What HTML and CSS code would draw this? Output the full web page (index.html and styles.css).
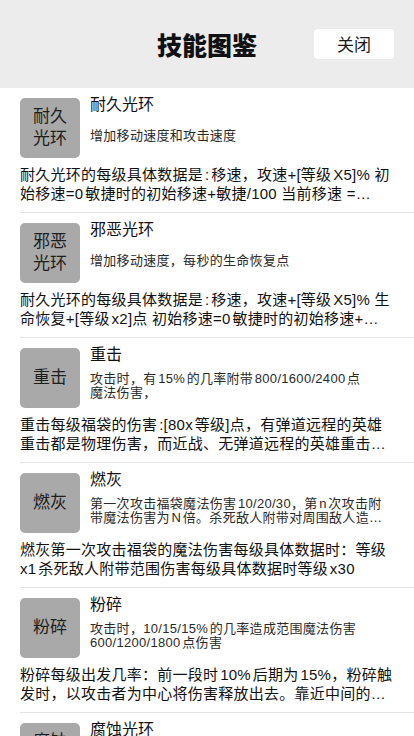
FILE: index.html
```html
<!DOCTYPE html>
<html lang="zh">
<head>
<meta charset="utf-8">
<meta name="viewport" content="width=device-width, initial-scale=1">
<title>技能图鉴</title>
<link rel="stylesheet" href="styles.css">
</head>
<body>
<div class="page">
  <header class="topbar">
    <h1 class="title">技能图鉴</h1>
    <button class="close-btn" type="button">关闭</button>
  </header>
  <ul class="skill-list">
    <li class="skill">
      <div class="skill-head">
        <div class="skill-icon">耐久<br>光环</div>
        <div class="skill-info">
          <div class="skill-name">耐久光环</div>
          <div class="skill-sub">增加移动速度和攻击速度</div>
        </div>
      </div>
      <p class="skill-desc">耐久光环的每级具体数据是:移速，攻速+[等级X5]% 初始移速=0敏捷时的初始移速+敏捷/100 当前移速 =<br>当前移速+当前移速×移速加成</p>
    </li>
    <li class="skill">
      <div class="skill-head">
        <div class="skill-icon">邪恶<br>光环</div>
        <div class="skill-info">
          <div class="skill-name">邪恶光环</div>
          <div class="skill-sub">增加移动速度，每秒的生命恢复点</div>
        </div>
      </div>
      <p class="skill-desc">耐久光环的每级具体数据是:移速，攻速+[等级X5]% 生命恢复+[等级x2]点 初始移速=0敏捷时的初始移速+<br>敏捷/100</p>
    </li>
    <li class="skill">
      <div class="skill-head">
        <div class="skill-icon">重击</div>
        <div class="skill-info">
          <div class="skill-name">重击</div>
          <div class="skill-sub">攻击时，有15%的几率附带800/1600/2400点<br>魔法伤害，</div>
        </div>
      </div>
      <p class="skill-desc">重击每级福袋的伤害:[80x等级]点，有弹道远程的英雄重击都是物理伤害，而近战、无弹道远程的英雄重击都是魔法伤害</p>
    </li>
    <li class="skill">
      <div class="skill-head">
        <div class="skill-icon">燃灰</div>
        <div class="skill-info">
          <div class="skill-name">燃灰</div>
          <div class="skill-sub">第一次攻击福袋魔法伤害10/20/30，第n次攻击附带魔法伤害为N倍。杀死敌人附带对周围敌人造成范围伤害</div>
        </div>
      </div>
      <p class="skill-desc">燃灰第一次攻击福袋的魔法伤害每级具体数据时：等级x1杀死敌人附带范围伤害每级具体数据时等级x30</p>
    </li>
    <li class="skill">
      <div class="skill-head">
        <div class="skill-icon">粉碎</div>
        <div class="skill-info">
          <div class="skill-name">粉碎</div>
          <div class="skill-sub">攻击时，10/15/15%的几率造成范围魔法伤害600/1200/1800点伤害</div>
        </div>
      </div>
      <p class="skill-desc">粉碎每级出发几率：前一段时10%后期为15%，粉碎触发时，以攻击者为中心将伤害释放出去。靠近中间的敌人受到的伤害更高</p>
    </li>
    <li class="skill">
      <div class="skill-head">
        <div class="skill-icon">腐蚀<br>光环</div>
        <div class="skill-info">
          <div class="skill-name">腐蚀光环</div>
          <div class="skill-sub">降低周围敌人的护甲</div>
        </div>
      </div>
      <p class="skill-desc">腐蚀光环的每级具体数据是:护甲-[等级x2]</p>
    </li>
  </ul>
</div>
</body>
</html>
```
FILE: styles.css
```css
* { box-sizing: border-box; }
html, body {
  margin: 0;
  padding: 0;
  background: #ffffff;
}
body {
  font-family: "Liberation Sans", "Noto Sans CJK SC", sans-serif;
  color: #111111;
  text-autospace: normal;
}
.page {
  width: 414px;
  height: 736px;
  overflow: hidden;
  display: flex;
  flex-direction: column;
}
.topbar {
  flex: 0 0 88px;
  background: #ececec;
  display: flex;
  align-items: center;
  justify-content: center;
  position: relative;
}
.title {
  margin: 0;
  font-family: "Noto Sans CJK SC", sans-serif;
  font-size: 25px;
  line-height: 30px;
  font-weight: 900;
  color: #111111;
}
.close-btn {
  position: absolute;
  right: 20px;
  top: 29px;
  width: 80px;
  height: 30px;
  border: none;
  border-radius: 4px;
  background: #ffffff;
  font-family: "Noto Sans CJK SC", sans-serif;
  font-size: 17px;
  line-height: 30px;
  padding: 0;
  color: #1a1a1a;
}
.skill-list {
  list-style: none;
  margin: 0;
  padding: 0;
}
.skill {
  height: 125px;
  margin-left: 20px;
  padding: 10px 20px 0 0;
  border-bottom: 1px solid #e3e3e3;
}
.skill-head {
  display: flex;
  gap: 10px;
  height: 60px;
}
.skill-icon {
  flex: 0 0 60px;
  height: 60px;
  border-radius: 5px;
  background: #a9a9a9;
  display: flex;
  align-items: center;
  justify-content: center;
  text-align: center;
  font-size: 17px;
  line-height: 22px;
  color: #1e1e1e;
}
.skill-info {
  flex: 1;
  min-width: 0;
  display: flex;
  flex-direction: column;
}
.skill-name {
  margin-top: -2px;
  font-size: 16px;
  line-height: 18px;
  color: #111111;
}
.skill-sub {
  margin: auto 0;
  font-size: 13px;
  line-height: 14px;
  letter-spacing: 0.3px;
  color: #2a2a2a;
  display: -webkit-box;
  -webkit-box-orient: vertical;
  -webkit-line-clamp: 2;
  overflow: hidden;
}
.skill-desc {
  margin: 7px -2px 0 0;
  font-size: 15px;
  line-height: 19px;
  letter-spacing: 0.25px;
  color: #111111;
  display: -webkit-box;
  -webkit-box-orient: vertical;
  -webkit-line-clamp: 2;
  overflow: hidden;
}
```
